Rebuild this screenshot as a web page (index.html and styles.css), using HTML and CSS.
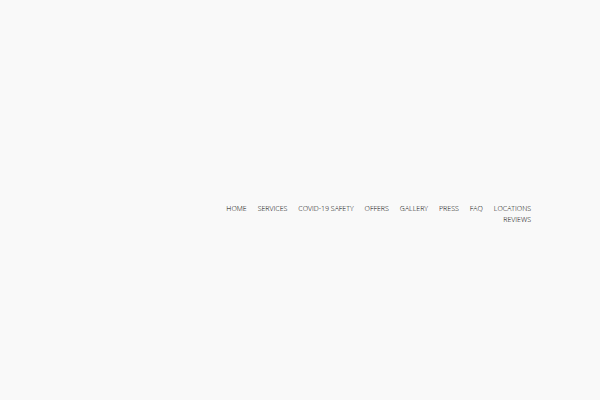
FILE: index.html
```html
<!DOCTYPE html>
<html lang="en">
<head>
    <meta charset="utf-8">
    <title>Home</title>
    <link rel="stylesheet" href="styles.css">
</head>
<body>
    <header class="header">
        <nav class="nav">
            <a href="index.html" class="nav-link">Home</a>
            <a href="services.html" class="nav-link">Services</a>
            <a href="covid-19-safety.html" class="nav-link">Covid-19 Safety</a>
            <a href="offers.html" class="nav-link">Offers</a>
            <a href="gallery.html" class="nav-link">Gallery</a>
            <a href="press.html" class="nav-link">Press</a>
            <a href="faq.html" class="nav-link">FAQ</a>
            <a href="locations.html" class="nav-link">Locations</a>
            <a href="reviews.html" class="nav-link">Reviews</a>
        </nav>
    </header>
</body>
</html>
```

FILE: styles.css
```css
body {
    margin: 0;
    background-color: #f9f9f9;
    font-family: "Open Sans", sans-serif;
}
.header {
    display: flex;
    justify-content: flex-end;
    padding: 203px 69px 0;
}
.nav {
    display: flex;
    flex-wrap: wrap;
    justify-content: flex-end;
    column-gap: 11px;
    max-width: 320px;
}
.nav-link {
    color: #000;
    font-size: 7px;
    font-weight: 300;
    line-height: 11px;
    text-decoration: none;
    text-transform: uppercase;
}
.nav-link:hover {
    color: #555;
}
```
